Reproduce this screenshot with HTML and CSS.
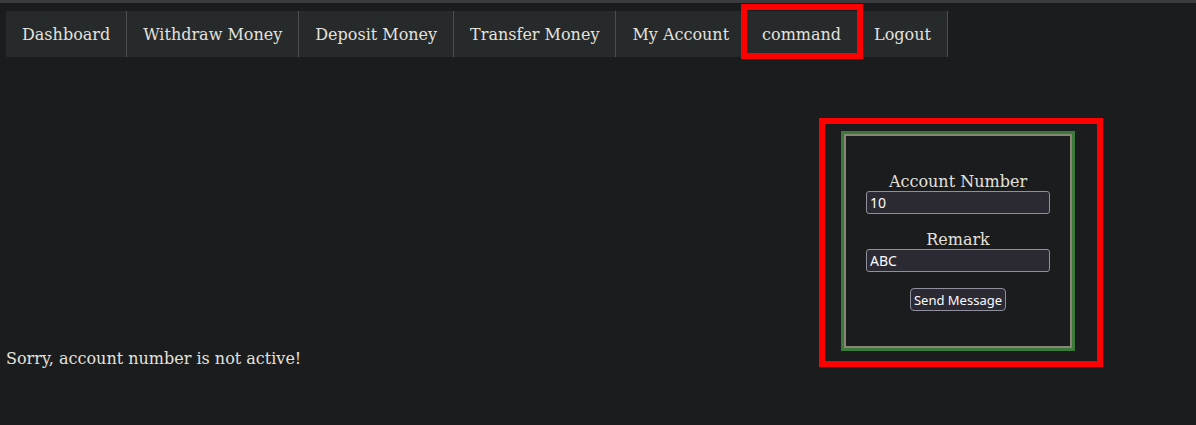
FILE: index.html
```html
<!DOCTYPE html>
<html lang="en">
<head>
<meta charset="utf-8">
<title>Bank</title>
<link rel="stylesheet" href="styles.css">
</head>
<body>
<div class="topbar"></div>
<nav class="nav">
  <ul class="nav-list">
    <li class="nav-item"><a class="nav-link" href="#">Dashboard</a></li>
    <li class="nav-item"><a class="nav-link" href="#">Withdraw Money</a></li>
    <li class="nav-item"><a class="nav-link" href="#">Deposit Money</a></li>
    <li class="nav-item"><a class="nav-link" href="#">Transfer Money</a></li>
    <li class="nav-item"><a class="nav-link" href="#">My Account</a></li>
    <li class="nav-item"><a class="nav-link" href="#">command</a></li>
    <li class="nav-item"><a class="nav-link" href="#">Logout</a></li>
  </ul>
</nav>
<main class="content">
  <p class="message">Sorry, account number is not active!</p>
  <form class="panel">
    <div class="panel-inner">
      <label class="field-label" for="acc">Account Number</label>
      <input class="field-input" id="acc" type="text" value="10">
      <label class="field-label field-label-gap" for="remark">Remark</label>
      <input class="field-input" id="remark" type="text" value="ABC">
      <button class="send-btn" type="button">Send Message</button>
    </div>
  </form>
</main>
<div class="annot annot-nav"></div>
<div class="annot annot-form"></div>
</body>
</html>
```

FILE: styles.css
```css
html, body {
  margin: 0;
  padding: 0;
}
body {
  background: #1b1c1e;
  color: #e4e1dc;
  font-family: "DejaVu Serif", serif;
  font-size: 16px;
  height: 425px;
  overflow: hidden;
}
.topbar {
  height: 3px;
  background: #3a3b3f;
}
.nav {
  margin: 8px 0 0 6px;
}
.nav-list {
  display: flex;
  width: fit-content;
  margin: 0;
  padding: 0;
  list-style: none;
  background: #262a2b;
}
.nav-item {
  border-right: 1px solid #4b4f52;
}
.nav-link {
  display: block;
  padding: 15px 16px 13px;
  line-height: 18px;
  color: #e4e1dc;
  text-decoration: none;
}
.content {
  display: grid;
  grid-template-columns: 1fr 234px;
  margin-top: 74px;
  padding: 0 121px 0 6px;
}
.message {
  margin: 0 0 -17px 0;
  align-self: end;
  line-height: 19px;
}
.panel {
  margin: 0;
  height: 220px;
  box-sizing: border-box;
  border: 3px solid #3b7a3b;
}
.panel-inner {
  height: 100%;
  box-sizing: border-box;
  border: 2px solid #8a8676;
  padding-top: 36px;
  display: flex;
  flex-direction: column;
  align-items: center;
}
.field-label {
  display: block;
  line-height: 19px;
  color: #e4e1dc;
}
.field-label-gap {
  margin-top: 16px;
}
.field-input {
  width: 184px;
  height: 23px;
  box-sizing: border-box;
  margin: 0;
  padding: 1px 3px;
  background: #2b2a33;
  border: 1px solid #8f8f9d;
  border-radius: 3px;
  color: #fbfbfe;
  font-family: "Noto Sans", sans-serif;
  font-size: 14px;
}
.send-btn {
  margin-top: 16px;
  width: 96px;
  height: 23px;
  box-sizing: border-box;
  padding: 0;
  white-space: nowrap;
  background: #2b2a33;
  border: 1px solid #8f8f9d;
  border-radius: 4px;
  color: #fbfbfe;
  font-family: "Noto Sans", sans-serif;
  font-size: 13px;
}
.annot {
  position: absolute;
  box-sizing: border-box;
  border: 6px solid #ff0000;
  pointer-events: none;
}
.annot-nav {
  left: 741px;
  top: 4px;
  width: 122px;
  height: 55px;
}
.annot-form {
  left: 819px;
  top: 118px;
  width: 284px;
  height: 249px;
}
```
